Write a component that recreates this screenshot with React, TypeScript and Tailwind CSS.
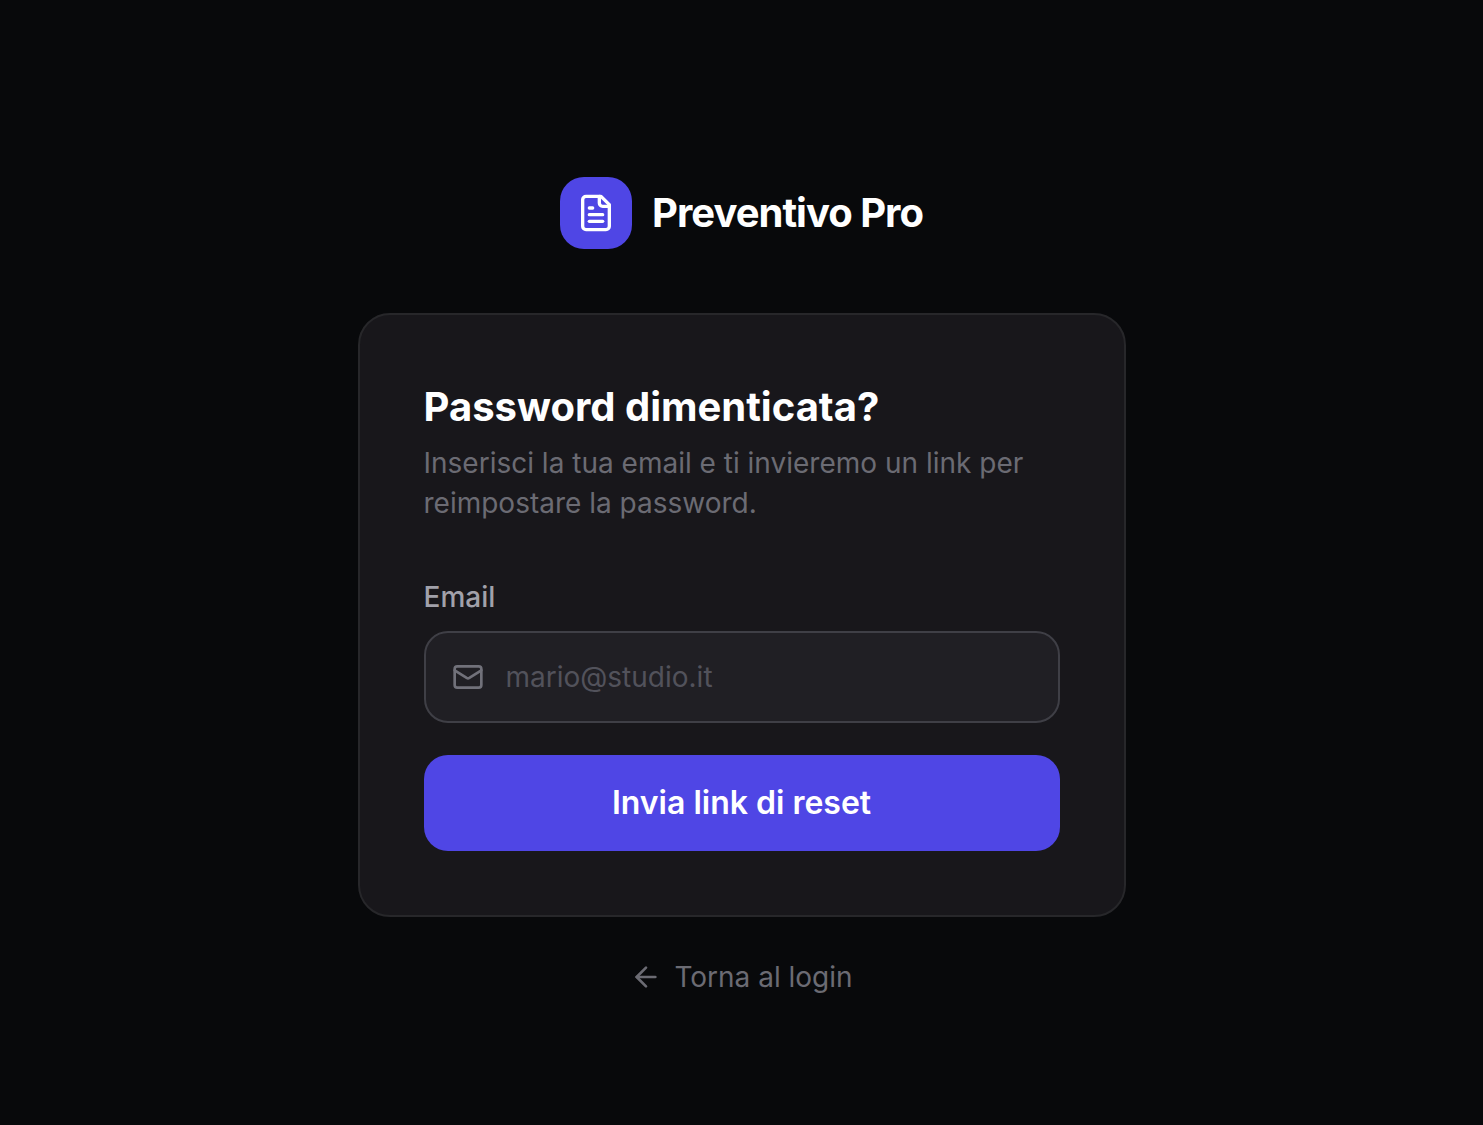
import { ArrowLeft, Mail } from 'lucide-react'

const DocumentIcon = () => (
  <svg
    className="size-10 text-white"
    viewBox="0 0 24 24"
    fill="none"
    stroke="currentColor"
    strokeWidth={2}
    strokeLinecap="round"
    strokeLinejoin="round"
    aria-hidden="true"
  >
    <path d="M15 2H6a2 2 0 0 0-2 2v16a2 2 0 0 0 2 2h12a2 2 0 0 0 2-2V7Z" />
    <path d="M14 2v4a2 2 0 0 0 2 2h4" />
    <path d="M10 9H8" />
    <path d="M16 13H8" />
    <path d="M16 17H8" />
  </svg>
)

export default function App() {
  return (
    <main className="min-h-screen bg-[#08090b] flex flex-col items-center justify-center px-8 pt-12 font-['Inter',sans-serif]">
      <div className="w-full max-w-3xl">
        <div className="flex items-center justify-center gap-5 mb-16">
          <div className="size-[72px] rounded-3xl bg-[#4f46e5] flex items-center justify-center">
            <DocumentIcon />
          </div>
          <span className="text-[40px] leading-[56px] font-bold tracking-tight text-white">Preventivo Pro</span>
        </div>

        <div className="bg-[#18171b] border-2 border-[#27272a] rounded-4xl p-16">
          <h1 className="text-[40px] leading-[56px] font-bold text-white mb-2">Password dimenticata?</h1>
          <p className="text-[28px] leading-10 text-[#6b6b73] mb-14">
            Inserisci la tua email e ti invieremo un link per reimpostare la password.
          </p>

          <form className="flex flex-col gap-8" onSubmit={(e) => e.preventDefault()}>
            <div>
              <label htmlFor="email" className="block text-[28px] leading-9 font-medium text-[#a1a1aa] mb-4">
                Email
              </label>
              <div className="relative">
                <Mail className="absolute left-7 top-1/2 -translate-y-1/2 size-8 text-[#71717a]" />
                <input
                  id="email"
                  type="email"
                  placeholder="mario@studio.it"
                  className="w-full h-[92px] rounded-3xl bg-[#201f24] border-2 border-[#3f3f46] pl-20 pr-6 text-[28px] text-white placeholder:text-[#52525b] outline-none focus:border-[#4f46e5]"
                />
              </div>
            </div>
            <button type="submit" className="w-full h-24 rounded-3xl bg-[#4f46e5] text-[32px] font-semibold text-white">
              Invia link di reset
            </button>
          </form>
        </div>

        <div className="flex justify-center mt-10">
          <a href="#login" className="flex items-center gap-3 text-[28px] leading-10 text-[#6b6b73]">
            <ArrowLeft className="size-8" />
            Torna al login
          </a>
        </div>
      </div>
    </main>
  )
}
